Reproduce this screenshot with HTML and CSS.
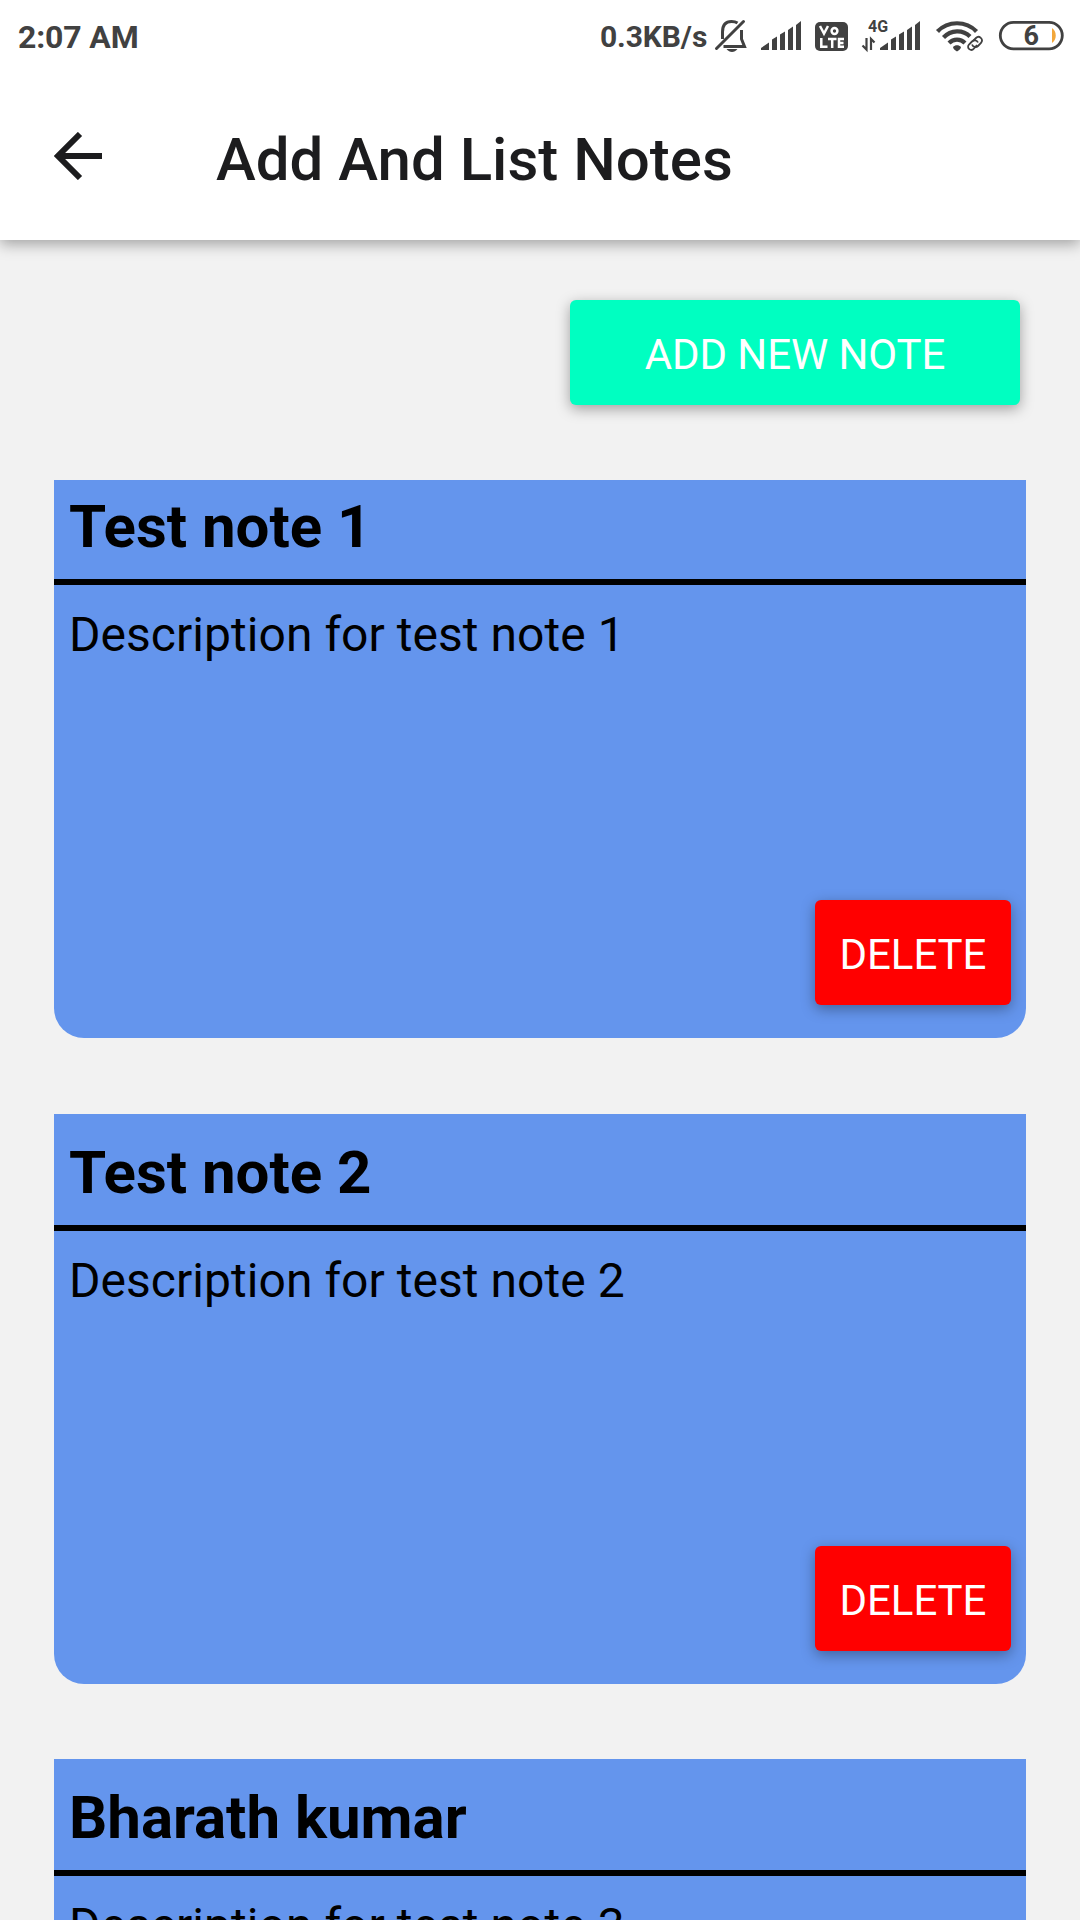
FILE: index.html
```html
<!DOCTYPE html>
<html lang="en">
<head>
<meta charset="utf-8">
<title>Add And List Notes</title>
<link rel="stylesheet" href="styles.css">
</head>
<body>
<div class="screen">
  <header class="header">
    <div class="status">
      <span class="clock">2:07 AM</span>
      <span class="speed">0.3KB/s</span>
      <svg class="status-icons" width="374" height="72" viewBox="706 0 374 72" fill="#414141">
        <!-- muted bell -->
        <g fill="none" stroke="#414141" stroke-width="3">
          <path d="M716.500 48.500 L743.500 21.500" stroke-linecap="round"/>
          <path d="M722.500 39 V32 C722.500 25 726 21.500 731.500 21.500 C734 21.500 736 22 737.500 23"/>
          <path d="M741.500 30 V39 L744.500 46.500 H723.500"/>
        </g>
        <path d="M726.500 49 H737.500 C736 51 734 52 732 52 S728 51 726.500 49 Z"/>
        <!-- first SIM signal -->
        <path id="bars" d="M761 50 V48 L769 42.500 V50 Z M772 50 V39.500 L777 36.500 V50 Z M780 50 V34.500 L785 31.500 V50 Z M788 50 V30 L793 26.500 V50 Z M796 50 V25 L801 21 V50 Z"/>
        <!-- VoLTE badge -->
        <rect x="815" y="22" width="33" height="29" rx="5"/>
        <g fill="none" stroke="#fff" stroke-width="2.500">
          <path d="M820 26 L824 33.500 L828 26"/><circle cx="834.500" cy="31" r="2.900"/>
          <path d="M821.300 38 V46.800 H827.500 M828 39 H836.500 M832.200 39 V48 M844 39 H839 V46.800 H844 M839 43 H843.500"/>
        </g>
        <text class="net" x="868" y="31.500">4G</text>
        <path d="M866.500 38 V49.500 L862.500 45.500 M871 50 V39 L874.500 42.500" fill="none" stroke="#414141" stroke-width="2.200"/>
        <use href="#bars" x="119"/>
        <!-- wifi with link -->
        <g fill="none" stroke="#414141" stroke-width="4.200">
          <path d="M937.500 31.500 C948 20.500 966 20.500 976.500 31.500"/>
          <path d="M943.500 37.500 C951 29.500 963 29.500 970 36.500"/>
          <path d="M949 43 C953.500 38.500 960.500 38.500 965 43"/>
        </g>
        <path d="M953 47 C955 44.500 959 44.500 961 47 C961 49 959 50 957 51.500 C955 50 953 49 953 47 Z"/>
        <g fill="none" stroke="#414141" stroke-width="1.800">
          <path d="M973 41 L976 38 C979 35 984 39 981 43 L978 46 C976 48 973 47 972 44.500"/>
          <path d="M977 45 L974 48.500 C971 52 966 48 969 44.500 L972 41.500 C974 39.500 977 40 978 42.500"/>
        </g>
        <!-- battery -->
        <rect x="1000.300" y="22.300" width="62" height="26.500" rx="13.200" fill="none" stroke="#414141" stroke-width="2.800"/>
        <path d="M1052 28 C1057 31 1057 40 1052 43 Z" fill="#f2a73b"/>
        <text class="battery" x="1023.500" y="45">6</text>
      </svg>
    </div>
    <div class="toolbar">
      <svg class="back" width="48" height="48" viewBox="0 0 48 48" fill="none" stroke="#1c1c1e" stroke-width="6"><path d="M48 24 H4 M26 2 L4 24 L26 46"/></svg>
      <h1 class="heading">Add And List Notes</h1>
    </div>
  </header>
  <main class="content">
    <button class="button add">ADD NEW NOTE</button>
    <section class="notes">
      <article class="note first">
        <h2 class="title">Test note 1</h2>
        <p class="description">Description for test note 1</p>
        <button class="button delete">DELETE</button>
      </article>
      <article class="note">
        <h2 class="title">Test note 2</h2>
        <p class="description">Description for test note 2</p>
        <button class="button delete">DELETE</button>
      </article>
      <article class="note">
        <h2 class="title">Bharath kumar</h2>
        <p class="description">Description for test note 3</p>
      </article>
    </section>
  </main>
</div>
</body>
</html>
```
FILE: styles.css
```css
* { box-sizing: border-box; }

body {
  margin: 0;
  font-family: Roboto, sans-serif;
  color: #000;
}

.screen {
  width: 1080px;
  height: 1920px;
  overflow: hidden;
  background: #f2f2f2;
}

.header {
  height: 240px;
  background: #fff;
  box-shadow: 0 4px 14px rgba(0, 0, 0, 0.34);
}

.status {
  display: flex;
  height: 72px;
  padding-left: 18px;
  font-weight: 700;
  color: #414141;
}

.clock {
  width: 582px;
  font-size: 32px;
  line-height: 74px;
  letter-spacing: -0.15px;
}

.speed {
  width: 106px;
  font-size: 30px;
  line-height: 74px;
  letter-spacing: -0.1px;
  white-space: nowrap;
}

.net { font: 700 16px Roboto, sans-serif; }
.battery { font: 700 27px Roboto, sans-serif; }

.toolbar {
  display: flex;
  align-items: center;
  height: 168px;
  padding-left: 54px;
  gap: 114px;
}

.heading {
  margin: 7px 0 0;
  font-size: 60px;
  font-weight: 500;
  line-height: 70px;
  color: #1c1c1e;
}

.content {
  display: flex;
  flex-direction: column;
  padding: 60px 54px 0;
}

.button {
  height: 105px;
  padding: 3px 0 0;
  border: 0;
  border-radius: 6px;
  font: 400 42px Roboto, sans-serif;
  letter-spacing: -0.08px;
  color: #fff;
  box-shadow: 0 4px 14px rgba(0, 0, 0, 0.34);
}

.add {
  align-self: flex-end;
  width: 450px;
  margin-right: 6px;
  background: #00ffc1;
}

.notes {
  display: flex;
  flex-direction: column;
  gap: 75px;
  padding-top: 75px;
}

.note {
  display: flex;
  flex-direction: column;
  height: 570px;
  border-radius: 0 0 30px 30px;
  background: #6495ed;
}

.note.first {
  height: 558px;
  margin-bottom: 1px;
}

.title {
  height: 117px;
  margin: 0;
  padding: 24px 15px 0;
  border-bottom: 6px solid #000;
  font-size: 60px;
  font-weight: 700;
  line-height: 70px;
}

.first .title {
  height: 105px;
  padding-top: 12px;
}

.description {
  margin: 0;
  padding: 22px 15px 0;
  font-size: 48px;
  line-height: 56px;
  letter-spacing: 0.04px;
}

.delete {
  align-self: flex-end;
  width: 196px;
  margin: auto 15px 33px 0;
  background: #f00;
}
```
